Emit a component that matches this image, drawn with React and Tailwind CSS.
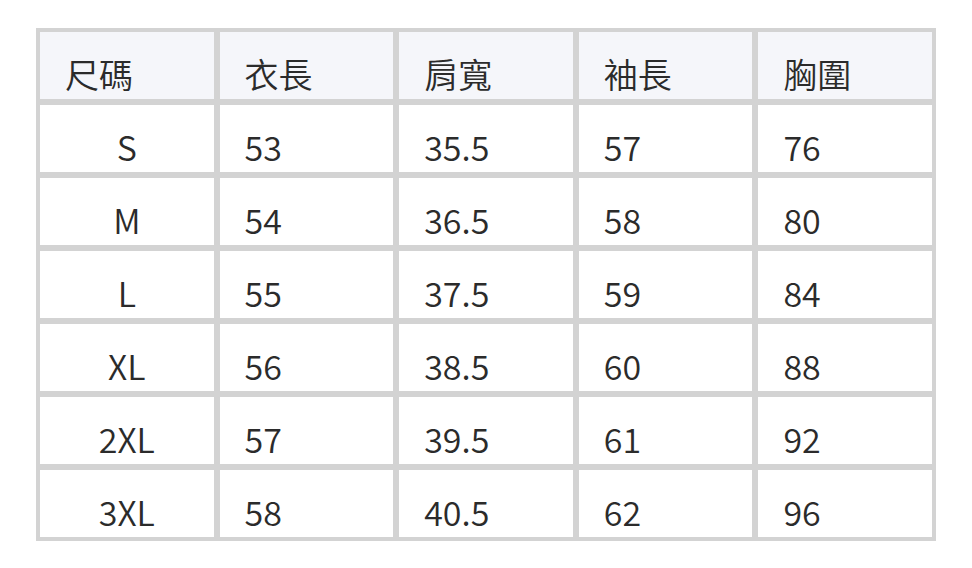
import React from 'react'

const header = ['尺碼', '衣長', '肩寬', '袖長', '胸圍']

const rows = [
    ['S', '53', '35.5', '57', '76'],
    ['M', '54', '36.5', '58', '80'],
    ['L', '55', '37.5', '59', '84'],
    ['XL', '56', '38.5', '60', '88'],
    ['2XL', '57', '39.5', '61', '92'],
    ['3XL', '58', '40.5', '62', '96'],
]

const cell = 'border-[3px] border-[#d3d3d3] pl-[25px] pr-[10px] pt-[18px] pb-[1px] leading-[48px] align-bottom'

const App = () => (
    <div
        className="w-[972px] h-[568px] bg-white pt-[28px] pl-[36px] text-[34px] text-[#2b2b2b] font-[350]"
        style={{ fontFamily: '"Noto Sans CJK TC", "Noto Sans", sans-serif' }}
    >
        <table className="table-fixed w-[900px] border-separate border-spacing-0 border border-[#d3d3d3]">
            <thead>
                <tr className="bg-[#f5f6fa]">
                    {header.map((h) => (
                        <th key={h} className={`${cell} text-left font-[350]`}>{h}</th>
                    ))}
                </tr>
            </thead>
            <tbody>
                {rows.map((r) => (
                    <tr key={r[0]}>
                        {r.map((v, i) => (
                            <td
                                key={i}
                                className={i === 0 ? 'border-[3px] border-[#d3d3d3] pt-[18px] pb-[1px] leading-[48px] align-bottom text-center' : cell}
                            >
                                {v}
                            </td>
                        ))}
                    </tr>
                ))}
            </tbody>
        </table>
    </div>
)

export default App
